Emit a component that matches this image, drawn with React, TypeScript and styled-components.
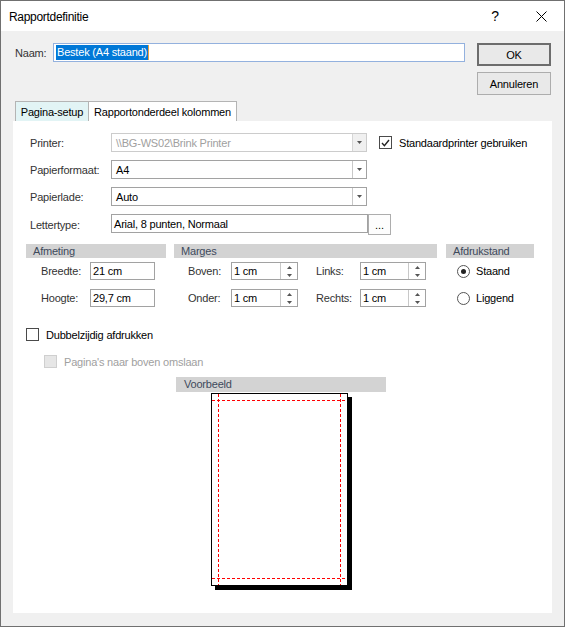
import React, { FC } from "react";
import styled, { createGlobalStyle } from "styled-components";

const UI_FONT = `"Liberation Sans", Arial, sans-serif`;

const GlobalStyle = createGlobalStyle`
  html, body {
    margin: 0;
    padding: 0;
    background: #fff;
  }
  body {
    font-family: ${UI_FONT};
  }
`;

const Window = styled.div`
  width: 565px;
  height: 627px;
  box-sizing: border-box;
  border: 1px solid #707070;
  display: flex;
  flex-direction: column;
  background: #f0f0f0;
  font-family: ${UI_FONT};
  font-size: 11px;
  letter-spacing: -0.2px;
  color: #1e1e1e;
`;

const TitleBar = styled.div`
  height: 30px;
  flex: none;
  display: flex;
  align-items: center;
  background: #fff;
  padding-left: 8px;
`;

const Title = styled.div`
  flex: 1;
  font-size: 12px;
  letter-spacing: -0.3px;
  color: #000;
  padding-top: 1px;
`;

const TitleButton = styled.div`
  width: 46px;
  height: 30px;
  display: flex;
  align-items: center;
  justify-content: center;
  font-size: 14px;
  color: #000;
`;

const Body = styled.div`
  flex: 1;
  display: flex;
  flex-direction: column;
  padding: 12px 12px 13px 12px;
  min-height: 0;
`;

const Header = styled.div`
  display: flex;
  align-items: flex-start;
  gap: 12px;
  margin: 0 1px 0 2px;
`;

const NameRow = styled.div`
  flex: 1;
  display: flex;
  align-items: center;
  height: 19px;
`;

const NameLabel = styled.span`
  width: 38px;
  color: #333;
`;

const NameInput = styled.div`
  flex: 1;
  height: 19px;
  box-sizing: border-box;
  border: 1px solid #93b1de;
  background: #fff;
  display: flex;
  align-items: center;
  padding-left: 2px;
`;

const Selection = styled.span`
  background: #0078d7;
  color: #fff;
  line-height: 15px;
  padding: 0 1px;
  border-right: 1px solid #e8a040;
`;

const ButtonColumn = styled.div`
  display: flex;
  flex-direction: column;
  gap: 6px;
`;

const DialogButton = styled.div<{ $default?: boolean }>`
  width: 74px;
  height: 23px;
  box-sizing: border-box;
  display: flex;
  align-items: center;
  justify-content: center;
  background: #e9e9e9;
  border: ${(p) => (p.$default ? "2px solid #6d6d6d" : "1px solid #adadad")};
  color: #000;
`;

const Tabs = styled.div`
  display: flex;
  margin: 6px 0 0 2px;
`;

const Tab = styled.div<{ $active?: boolean; $width: number }>`
  width: ${(p) => p.$width}px;
  height: 20px;
  box-sizing: border-box;
  display: flex;
  align-items: center;
  justify-content: center;
  border: 1px solid #b4b4b4;
  border-bottom: none;
  margin-left: ${(p) => (p.$active ? "0" : "-1px")};
  background: ${(p) => (p.$active ? "#e2f4f5" : "#fff")};
  color: #000;
`;

const Panel = styled.div`
  flex: 1;
  display: flex;
  flex-direction: column;
  background: #fff;
  padding-top: 12px;
`;

const FormRows = styled.div`
  display: flex;
  flex-direction: column;
  gap: 8px;
  padding-left: 17px;
`;

const FormRow = styled.div<{ $tall?: boolean }>`
  display: flex;
  align-items: ${(p) => (p.$tall ? "flex-start" : "center")};
  height: ${(p) => (p.$tall ? 21 : 19)}px;
`;

const RowLabel = styled.span<{ $tall?: boolean }>`
  width: 81px;
  color: #333;
  align-self: center;
`;

const Combo = styled.div<{ $disabled?: boolean }>`
  width: 256px;
  height: 19px;
  box-sizing: border-box;
  display: flex;
  border: 1px solid ${(p) => (p.$disabled ? "#cccccc" : "#a2a2a2")};
  background: #fff;
`;

const ComboText = styled.div<{ $disabled?: boolean }>`
  flex: 1;
  display: flex;
  align-items: center;
  padding-left: 4px;
  color: ${(p) => (p.$disabled ? "#a0a0a0" : "#000")};
`;

const ComboArrow = styled.div<{ $disabled?: boolean }>`
  width: 13px;
  display: flex;
  align-items: center;
  justify-content: center;
  border-left: 1px solid ${(p) => (p.$disabled ? "#d6d6d6" : "#c8c8c8")};
  background: ${(p) => (p.$disabled ? "#f0f0f0" : "#fff")};
`;

const TextBox = styled.div<{ $width: number; $height?: number }>`
  width: ${(p) => p.$width}px;
  height: ${(p) => p.$height ?? 18}px;
  box-sizing: border-box;
  border: 1px solid #a2a2a2;
  background: #fff;
  display: flex;
  align-items: center;
  padding-left: 2px;
  color: #000;
`;

const EllipsisButton = styled.div`
  width: 23px;
  height: 21px;
  box-sizing: border-box;
  border: 1px solid #adadad;
  background: #fdfdfd;
  display: flex;
  align-items: flex-end;
  justify-content: center;
  padding-bottom: 3px;
  color: #000;
  letter-spacing: 0;
`;

const CheckRow = styled.div<{ $indent: number; $top: number }>`
  display: flex;
  align-items: center;
  gap: 7px;
  height: 13px;
  margin-left: ${(p) => p.$indent}px;
  margin-top: ${(p) => p.$top}px;
`;

const CheckBox = styled.div<{ $disabled?: boolean }>`
  width: 13px;
  height: 13px;
  box-sizing: border-box;
  border: 1px solid ${(p) => (p.$disabled ? "#cfcfcf" : "#4a4a4a")};
  background: ${(p) => (p.$disabled ? "#e6e6e6" : "#fff")};
  display: flex;
  align-items: center;
  justify-content: center;
`;

const CheckText = styled.span<{ $disabled?: boolean }>`
  color: ${(p) => (p.$disabled ? "#a0a0a0" : "#000")};
`;

const GroupRow = styled.div`
  display: flex;
  margin: 9px 0 0 13px;
`;

const Group = styled.div<{ $width: number; $gap?: number }>`
  width: ${(p) => p.$width}px;
  margin-left: ${(p) => p.$gap ?? 0}px;
`;

const GroupHeader = styled.div`
  height: 14px;
  line-height: 14px;
  background: #d3d3d3;
  padding-left: 7px;
  color: #3e4a5c;
`;

const FieldGrid = styled.div<{ $columns: string; $indent: number }>`
  display: grid;
  grid-template-columns: ${(p) => p.$columns};
  grid-auto-rows: 18px;
  row-gap: 9px;
  align-items: center;
  padding: 4px 0 0 ${(p) => p.$indent}px;
`;

const FieldLabel = styled.span`
  color: #333;
`;

const Spinner = styled.div<{ $width: number }>`
  width: ${(p) => p.$width}px;
  height: 18px;
  box-sizing: border-box;
  border: 1px solid #a2a2a2;
  background: #fff;
  display: flex;
`;

const SpinValue = styled.div`
  flex: 1;
  display: flex;
  align-items: center;
  padding-left: 2px;
  color: #000;
`;

const SpinButtons = styled.div`
  width: 16px;
  display: flex;
  flex-direction: column;
  border-left: 1px solid #c8c8c8;
`;

const SpinHalf = styled.div`
  flex: 1;
  display: flex;
  align-items: center;
  justify-content: center;
`;

const RadioRow = styled.div`
  display: flex;
  align-items: center;
  gap: 6px;
  color: #000;
`;

const Radio = styled.div<{ $checked?: boolean }>`
  width: 13px;
  height: 13px;
  box-sizing: border-box;
  border-radius: 50%;
  border: 1px solid #555;
  display: flex;
  align-items: center;
  justify-content: center;
  &::after {
    content: "";
    width: 5px;
    height: 5px;
    border-radius: 50%;
    background: ${(p) => (p.$checked ? "#222" : "transparent")};
  }
`;

const Preview = styled.div`
  margin: 9px 0 0 163px;
  display: flex;
  flex-direction: column;
`;

const PreviewHeader = styled.div`
  width: 210px;
  height: 15px;
  line-height: 15px;
  box-sizing: border-box;
  background: #d3d3d3;
  padding-left: 8px;
  color: #3e4a5c;
`;

const PreviewPage = styled.div`
  width: 137px;
  height: 193px;
  box-sizing: border-box;
  margin: 1px 0 0 35px;
  border: 1px solid #000;
  background: #fff;
  box-shadow: 4px 4px 0 #000;
  svg {
    display: block;
  }
`;

const DropArrow: FC = () => (
  <svg width="5" height="3" viewBox="0 0 5 3">
    <path d="M0 0h5L2.5 3z" fill="#555" />
  </svg>
);

const SpinArrow: FC<{ up?: boolean }> = ({ up }) => (
  <svg width="5" height="3" viewBox="0 0 5 3">
    <path d={up ? "M0 3h5L2.5 0z" : "M0 0h5L2.5 3z"} fill="#555" />
  </svg>
);

const CheckMark: FC = () => (
  <svg width="9" height="8" viewBox="0 0 9 8">
    <path d="M1 4l2.4 2.6L8 1" fill="none" stroke="#222" strokeWidth="1.4" />
  </svg>
);

const ComboBox: FC<{ value: string; disabled?: boolean }> = ({ value, disabled }) => (
  <Combo $disabled={disabled}>
    <ComboText $disabled={disabled}>{value}</ComboText>
    <ComboArrow $disabled={disabled}>
      <DropArrow />
    </ComboArrow>
  </Combo>
);

const SpinBox: FC<{ value: string; width: number }> = ({ value, width }) => (
  <Spinner $width={width}>
    <SpinValue>{value}</SpinValue>
    <SpinButtons>
      <SpinHalf><SpinArrow up /></SpinHalf>
      <SpinHalf><SpinArrow /></SpinHalf>
    </SpinButtons>
  </Spinner>
);

// page preview with dashed red margin lines
const PagePreview: FC = () => (
  <PreviewPage>
    <svg width="135" height="191" viewBox="0 0 135 191">
      <g stroke="#ff0000" strokeWidth="1" strokeDasharray="3 2" fill="none">
        <line x1="0" y1="6.5" x2="135" y2="6.5" />
        <line x1="0" y1="184.5" x2="135" y2="184.5" />
        <line x1="6.5" y1="0" x2="6.5" y2="191" />
        <line x1="128.5" y1="0" x2="128.5" y2="191" />
      </g>
    </svg>
  </PreviewPage>
);

const App: FC = () => {
  return (
    <>
      <GlobalStyle />
      <Window>
        <TitleBar>
          <Title>Rapportdefinitie</Title>
          <TitleButton>?</TitleButton>
          <TitleButton>
            <svg width="11" height="11" viewBox="0 0 11 11">
              <path d="M0.5 0.5l10 10M10.5 0.5l-10 10" stroke="#000" strokeWidth="1" />
            </svg>
          </TitleButton>
        </TitleBar>

        <Body>
          <Header>
            <NameRow>
              <NameLabel>Naam:</NameLabel>
              <NameInput>
                <Selection>Bestek (A4 staand)</Selection>
              </NameInput>
            </NameRow>
            <ButtonColumn>
              <DialogButton $default>OK</DialogButton>
              <DialogButton>Annuleren</DialogButton>
            </ButtonColumn>
          </Header>

          <Tabs>
            <Tab $active $width={74}>Pagina-setup</Tab>
            <Tab $width={149}>Rapportonderdeel kolommen</Tab>
          </Tabs>

          <Panel>
            <FormRows>
              <FormRow>
                <RowLabel>Printer:</RowLabel>
                <ComboBox value="\\BG-WS02\Brink Printer" disabled />
                <CheckRow $indent={12} $top={0}>
                  <CheckBox><CheckMark /></CheckBox>
                  <CheckText>Standaardprinter gebruiken</CheckText>
                </CheckRow>
              </FormRow>
              <FormRow>
                <RowLabel>Papierformaat:</RowLabel>
                <ComboBox value="A4" />
              </FormRow>
              <FormRow>
                <RowLabel>Papierlade:</RowLabel>
                <ComboBox value="Auto" />
              </FormRow>
              <FormRow $tall>
                <RowLabel>Lettertype:</RowLabel>
                <TextBox $width={257} $height={19}>Arial, 8 punten, Normaal</TextBox>
                <EllipsisButton>...</EllipsisButton>
              </FormRow>
            </FormRows>

            <GroupRow>
              <Group $width={140}>
                <GroupHeader>Afmeting</GroupHeader>
                <FieldGrid $columns="49px 65px" $indent={15}>
                  <FieldLabel>Breedte:</FieldLabel>
                  <TextBox $width={65}>21 cm</TextBox>
                  <FieldLabel>Hoogte:</FieldLabel>
                  <TextBox $width={65}>29,7 cm</TextBox>
                </FieldGrid>
              </Group>
              <Group $width={263} $gap={8}>
                <GroupHeader>Marges</GroupHeader>
                <FieldGrid $columns="43px 85px 44px 66px" $indent={14}>
                  <FieldLabel>Boven:</FieldLabel>
                  <SpinBox value="1 cm" width={67} />
                  <FieldLabel>Links:</FieldLabel>
                  <SpinBox value="1 cm" width={66} />
                  <FieldLabel>Onder:</FieldLabel>
                  <SpinBox value="1 cm" width={67} />
                  <FieldLabel>Rechts:</FieldLabel>
                  <SpinBox value="1 cm" width={66} />
                </FieldGrid>
              </Group>
              <Group $width={88} $gap={9}>
                <GroupHeader>Afdrukstand</GroupHeader>
                <FieldGrid $columns="1fr" $indent={11}>
                  <RadioRow><Radio $checked />Staand</RadioRow>
                  <RadioRow><Radio />Liggend</RadioRow>
                </FieldGrid>
              </Group>
            </GroupRow>

            <CheckRow $indent={13} $top={21}>
              <CheckBox />
              <CheckText>Dubbelzijdig afdrukken</CheckText>
            </CheckRow>
            <CheckRow $indent={31} $top={14}>
              <CheckBox $disabled />
              <CheckText $disabled>Pagina's naar boven omslaan</CheckText>
            </CheckRow>

            <Preview>
              <PreviewHeader>Voorbeeld</PreviewHeader>
              <PagePreview />
            </Preview>
          </Panel>
        </Body>
      </Window>
    </>
  );
};

export default App;
